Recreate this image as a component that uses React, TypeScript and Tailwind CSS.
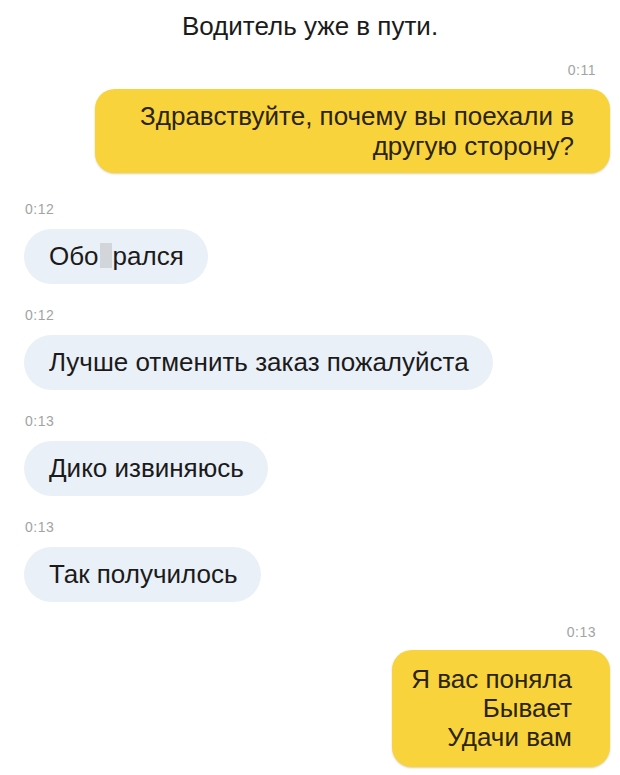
const incoming = [
  { time: "0:12", text: "censored" },
  { time: "0:12", text: "Лучше отменить заказ пожалуйста" },
  { time: "0:13", text: "Дико извиняюсь" },
  { time: "0:13", text: "Так получилось" },
];

function Time({ t, right }: { t: string; right?: boolean }) {
  return (
    <div
      className={`text-[14px] leading-[14px] tracking-[0.5px] text-[#a3a3a3] ${right ? "self-end pr-[14px]" : "pl-[1px]"}`}
    >
      {t}
    </div>
  );
}

function GrayBubble({ text }: { text: string }) {
  return (
    <div className="mt-[13px] w-fit rounded-[28px] bg-[#eaf0f7] pl-[25px] pr-[24px] py-[12px] text-[26px] leading-[31px] text-[#1b1b1b]">
      {text === "censored" ? (
        <span className="inline-flex items-center">
          Обо
          <span className="mx-[1px] inline-block h-[25px] w-[12px] -translate-y-[1px] bg-[#d2d5d9]" />
          рался
        </span>
      ) : (
        text
      )}
    </div>
  );
}

export default function App() {
  return (
    <div className="flex h-[775px] w-[620px] flex-col overflow-hidden bg-white font-['Liberation_Sans',Arial,sans-serif]">
      <div className="pt-[11px] text-center text-[26px] leading-[30px] text-[#1b1b1b]">
        Водитель уже в пути.
      </div>

      <div className="mt-[22px] flex flex-col pr-[10px]">
        <Time t="0:11" right />
        <div className="mt-[12px] w-[515px] self-end rounded-[20px] bg-[#f9d33b] py-[12px] pr-[36px] text-right text-[26px] leading-[30px] text-[#2a2410] shadow-[0_1px_2px_rgba(150,120,0,0.35)]">
          Здравствуйте, почему вы поехали в
          <br />
          другую сторону?
        </div>
      </div>

      <div className="mt-[29px] flex flex-col gap-[24px] px-[24px]">
        {incoming.map((m, i) => (
          <div key={i} className="flex flex-col">
            <Time t={m.time} />
            <GrayBubble text={m.text} />
          </div>
        ))}
      </div>

      <div className="mt-[23px] flex flex-col pr-[10px]">
        <Time t="0:13" right />
        <div className="mt-[11px] w-[218px] self-end rounded-[20px] bg-[#f9d33b] py-[15px] pr-[38px] text-right text-[26px] leading-[29px] text-[#2a2410] shadow-[0_1px_2px_rgba(150,120,0,0.35)]">
          Я вас поняла
          <br />
          Бывает
          <br />
          Удачи вам
        </div>
      </div>
    </div>
  );
}
